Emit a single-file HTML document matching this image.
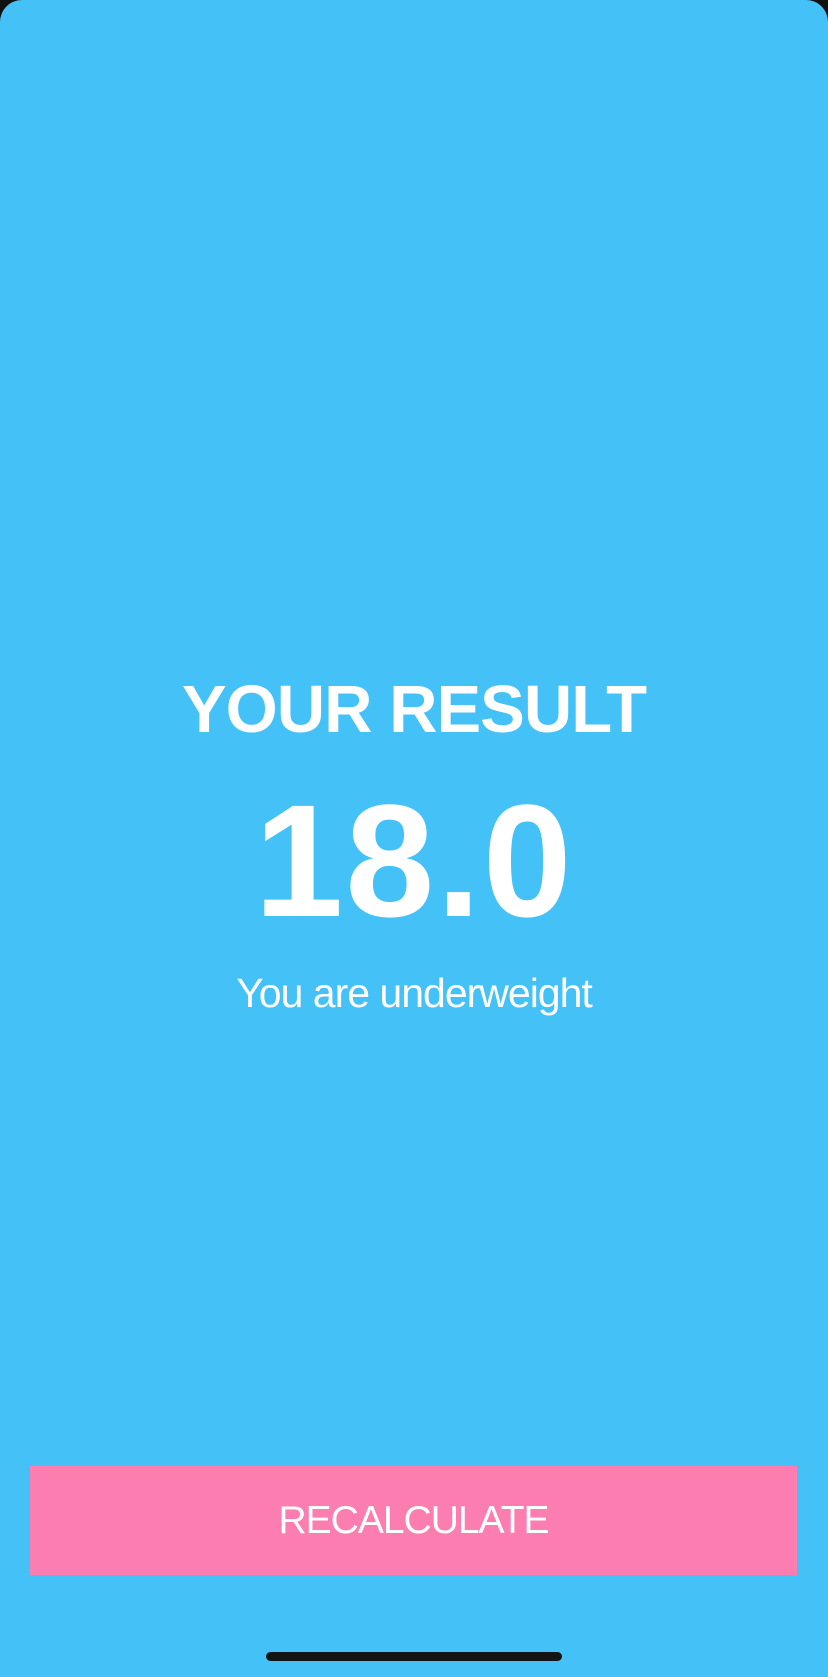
<!DOCTYPE html>
<html><head><meta charset="utf-8"><style>
html,body{margin:0;padding:0;background:#111;}
body{width:828px;height:1677px;overflow:hidden;position:relative;font-family:"Liberation Sans",sans-serif;color:#fff;}
.bg{position:absolute;left:0;top:0;width:828px;height:1677px;background:#44C1F7;border-radius:22px 22px 0 0;}
.t{position:absolute;left:0;width:828px;text-align:center;white-space:nowrap;}
#title{top:670px;font-size:67px;font-weight:bold;line-height:80px;letter-spacing:-1px;}
#num{top:776px;font-size:160px;font-weight:bold;line-height:170px;letter-spacing:2px;}
#sub{top:967px;font-size:41px;line-height:52px;letter-spacing:-1px;}
#btn{position:absolute;left:30px;top:1466px;width:767px;height:109px;background:#FC7EB1;}
#btn span{position:absolute;left:0;width:767px;top:30px;text-align:center;font-size:39px;line-height:50px;letter-spacing:-1px;}
#home{position:absolute;left:266px;top:1652px;width:296px;height:9px;border-radius:5px;background:#141414;}
</style></head><body>
<div class="bg"></div>
<div class="t" id="title">YOUR RESULT</div>
<div class="t" id="num">18.0</div>
<div class="t" id="sub">You are underweight</div>
<div id="btn"><span>RECALCULATE</span></div>
<div id="home"></div>
</body></html>
